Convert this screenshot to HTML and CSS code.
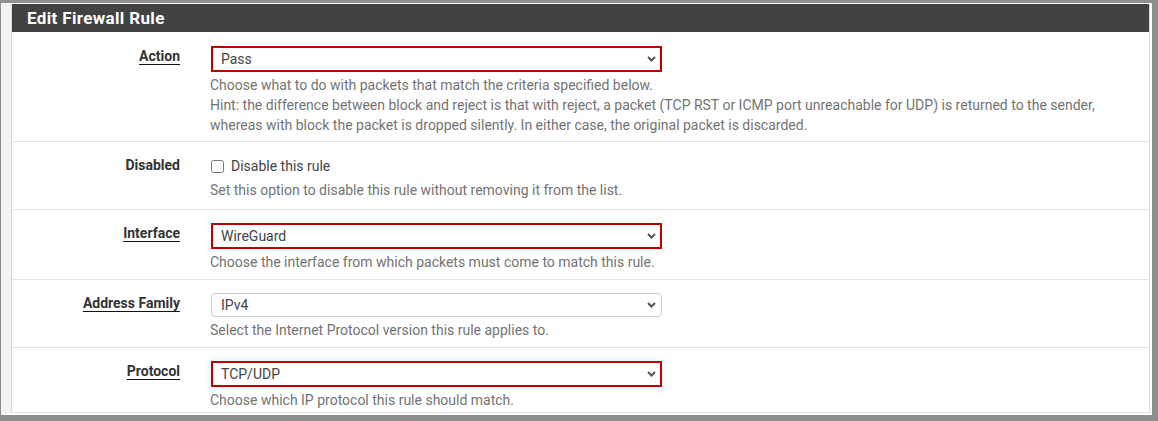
FILE: index.html
```html
<!DOCTYPE html>
<html>
<head>
<meta charset="utf-8">
<title>Edit Firewall Rule</title>
<link rel="stylesheet" href="styles.css">
</head>
<body>
<div class="window">
  <div class="gutter">
    <div class="panel">
      <div class="panel-heading">Edit Firewall Rule</div>
      <div class="panel-body">
        <div class="row first">
          <div class="label-col"><span class="req">Action</span></div>
          <div class="content">
            <div class="select invalid"><span>Pass</span><svg class="chev" width="9" height="6" viewBox="0 0 9 6"><path d="M1 1 L4.5 4.5 L8 1" fill="none" stroke="#555" stroke-width="2"/></svg></div>
            <div class="help">Choose what to do with packets that match the criteria specified below.<br>Hint: the difference between block and reject is that with reject, a packet (TCP RST or ICMP port unreachable for UDP) is returned to the sender,<br>whereas with block the packet is dropped silently. In either case, the original packet is discarded.</div>
          </div>
        </div>
        <div class="row check-row">
          <div class="label-col">Disabled</div>
          <div class="content">
            <label class="check"><input type="checkbox"><span>Disable this rule</span></label>
            <div class="help">Set this option to disable this rule without removing it from the list.</div>
          </div>
        </div>
        <div class="row">
          <div class="label-col"><span class="req">Interface</span></div>
          <div class="content">
            <div class="select invalid"><span>WireGuard</span><svg class="chev" width="9" height="6" viewBox="0 0 9 6"><path d="M1 1 L4.5 4.5 L8 1" fill="none" stroke="#555" stroke-width="2"/></svg></div>
            <div class="help">Choose the interface from which packets must come to match this rule.</div>
          </div>
        </div>
        <div class="row">
          <div class="label-col"><span class="req">Address Family</span></div>
          <div class="content">
            <div class="select normal"><span>IPv4</span><svg class="chev" width="9" height="6" viewBox="0 0 9 6"><path d="M1 1 L4.5 4.5 L8 1" fill="none" stroke="#555" stroke-width="2"/></svg></div>
            <div class="help">Select the Internet Protocol version this rule applies to.</div>
          </div>
        </div>
        <div class="row">
          <div class="label-col"><span class="req">Protocol</span></div>
          <div class="content">
            <div class="select invalid focus"><span>TCP/UDP</span><svg class="chev" width="9" height="6" viewBox="0 0 9 6"><path d="M1 1 L4.5 4.5 L8 1" fill="none" stroke="#555" stroke-width="2"/></svg></div>
            <div class="help">Choose which IP protocol this rule should match.</div>
          </div>
        </div>
      </div>
    </div>
  </div>
</div>
</body>
</html>
```
FILE: styles.css
```css
html, body {
  margin: 0;
  padding: 0;
}
body {
  font-family: Roboto, "Liberation Sans", Arial, sans-serif;
  width: 1158px;
  height: 421px;
  overflow: hidden;
  background: #fff;
}
.window {
  box-sizing: border-box;
  width: 1158px;
  height: 421px;
  border-style: solid;
  border-color: #8e8e8e;
  border-width: 3px 6px 6px 1px;
  display: flex;
  overflow: hidden;
  background: #fff;
}
.gutter {
  flex: 1;
  display: flex;
  min-width: 0;
  border-left: 10px solid #f2f2f2;
  border-top: 1px solid #fff;
  border-right: 2px solid #fff;
  border-bottom: 2px solid #fff;
}
.panel {
  flex: 1;
  min-width: 0;
  display: flex;
  flex-direction: column;
  overflow: hidden;
  background: #fff;
  border-left: 1px solid #dcdcdc;
  border-right: 1px solid #dcdcdc;
  border-bottom: 1px solid #dcdcdc;
}
.panel-heading {
  flex: none;
  height: 28px;
  line-height: 28px;
  background: #424242;
  color: #fff;
  font-weight: 700;
  font-size: 17px;
  padding-left: 15px;
  letter-spacing: 0.35px;
}
.panel-body {
  flex: 1;
  overflow: hidden;
}
.row {
  display: grid;
  grid-template-columns: 168px 1fr;
  column-gap: 30px;
  padding: 13px 0 7px;
  border-top: 1px solid #e2e2e2;
}
.row.first {
  border-top: 0;
  padding-top: 14px;
  padding-bottom: 6px;
}
.row.check-row {
  padding-bottom: 9px;
}
.label-col {
  text-align: right;
  font-size: 14px;
  font-weight: 700;
  line-height: 20px;
  color: #333;
}
.req {
  text-decoration: underline;
  text-decoration-color: #111;
  text-decoration-thickness: 1px;
  text-underline-offset: 3px;
}
.content {
  min-width: 0;
}
.select {
  box-sizing: border-box;
  width: 451px;
  height: 26px;
  margin-left: 1px;
  display: flex;
  align-items: center;
  justify-content: space-between;
  font-size: 14px;
  color: #444;
  background: #fff;
}
.select.invalid {
  border: 2px solid #c00000;
  padding: 0 4px 0 8px;
}
.select.normal {
  height: 24px;
  border: 1px solid #ccc;
  border-radius: 4px;
  padding: 0 5px 0 9px;
}
.select.focus {
  box-shadow: 0 0 6px rgba(102, 175, 233, 0.35);
}
.chev {
  flex: none;
  display: block;
}
.help {
  margin-top: 3px;
  font-size: 14px;
  line-height: 20px;
  color: #737373;
  white-space: nowrap;
}
.check {
  display: flex;
  align-items: center;
  height: 22px;
  gap: 7px;
  font-size: 14px;
  color: #444;
}
.check input {
  margin: 0 0 0 1px;
  width: 13px;
  height: 13px;
}
```
